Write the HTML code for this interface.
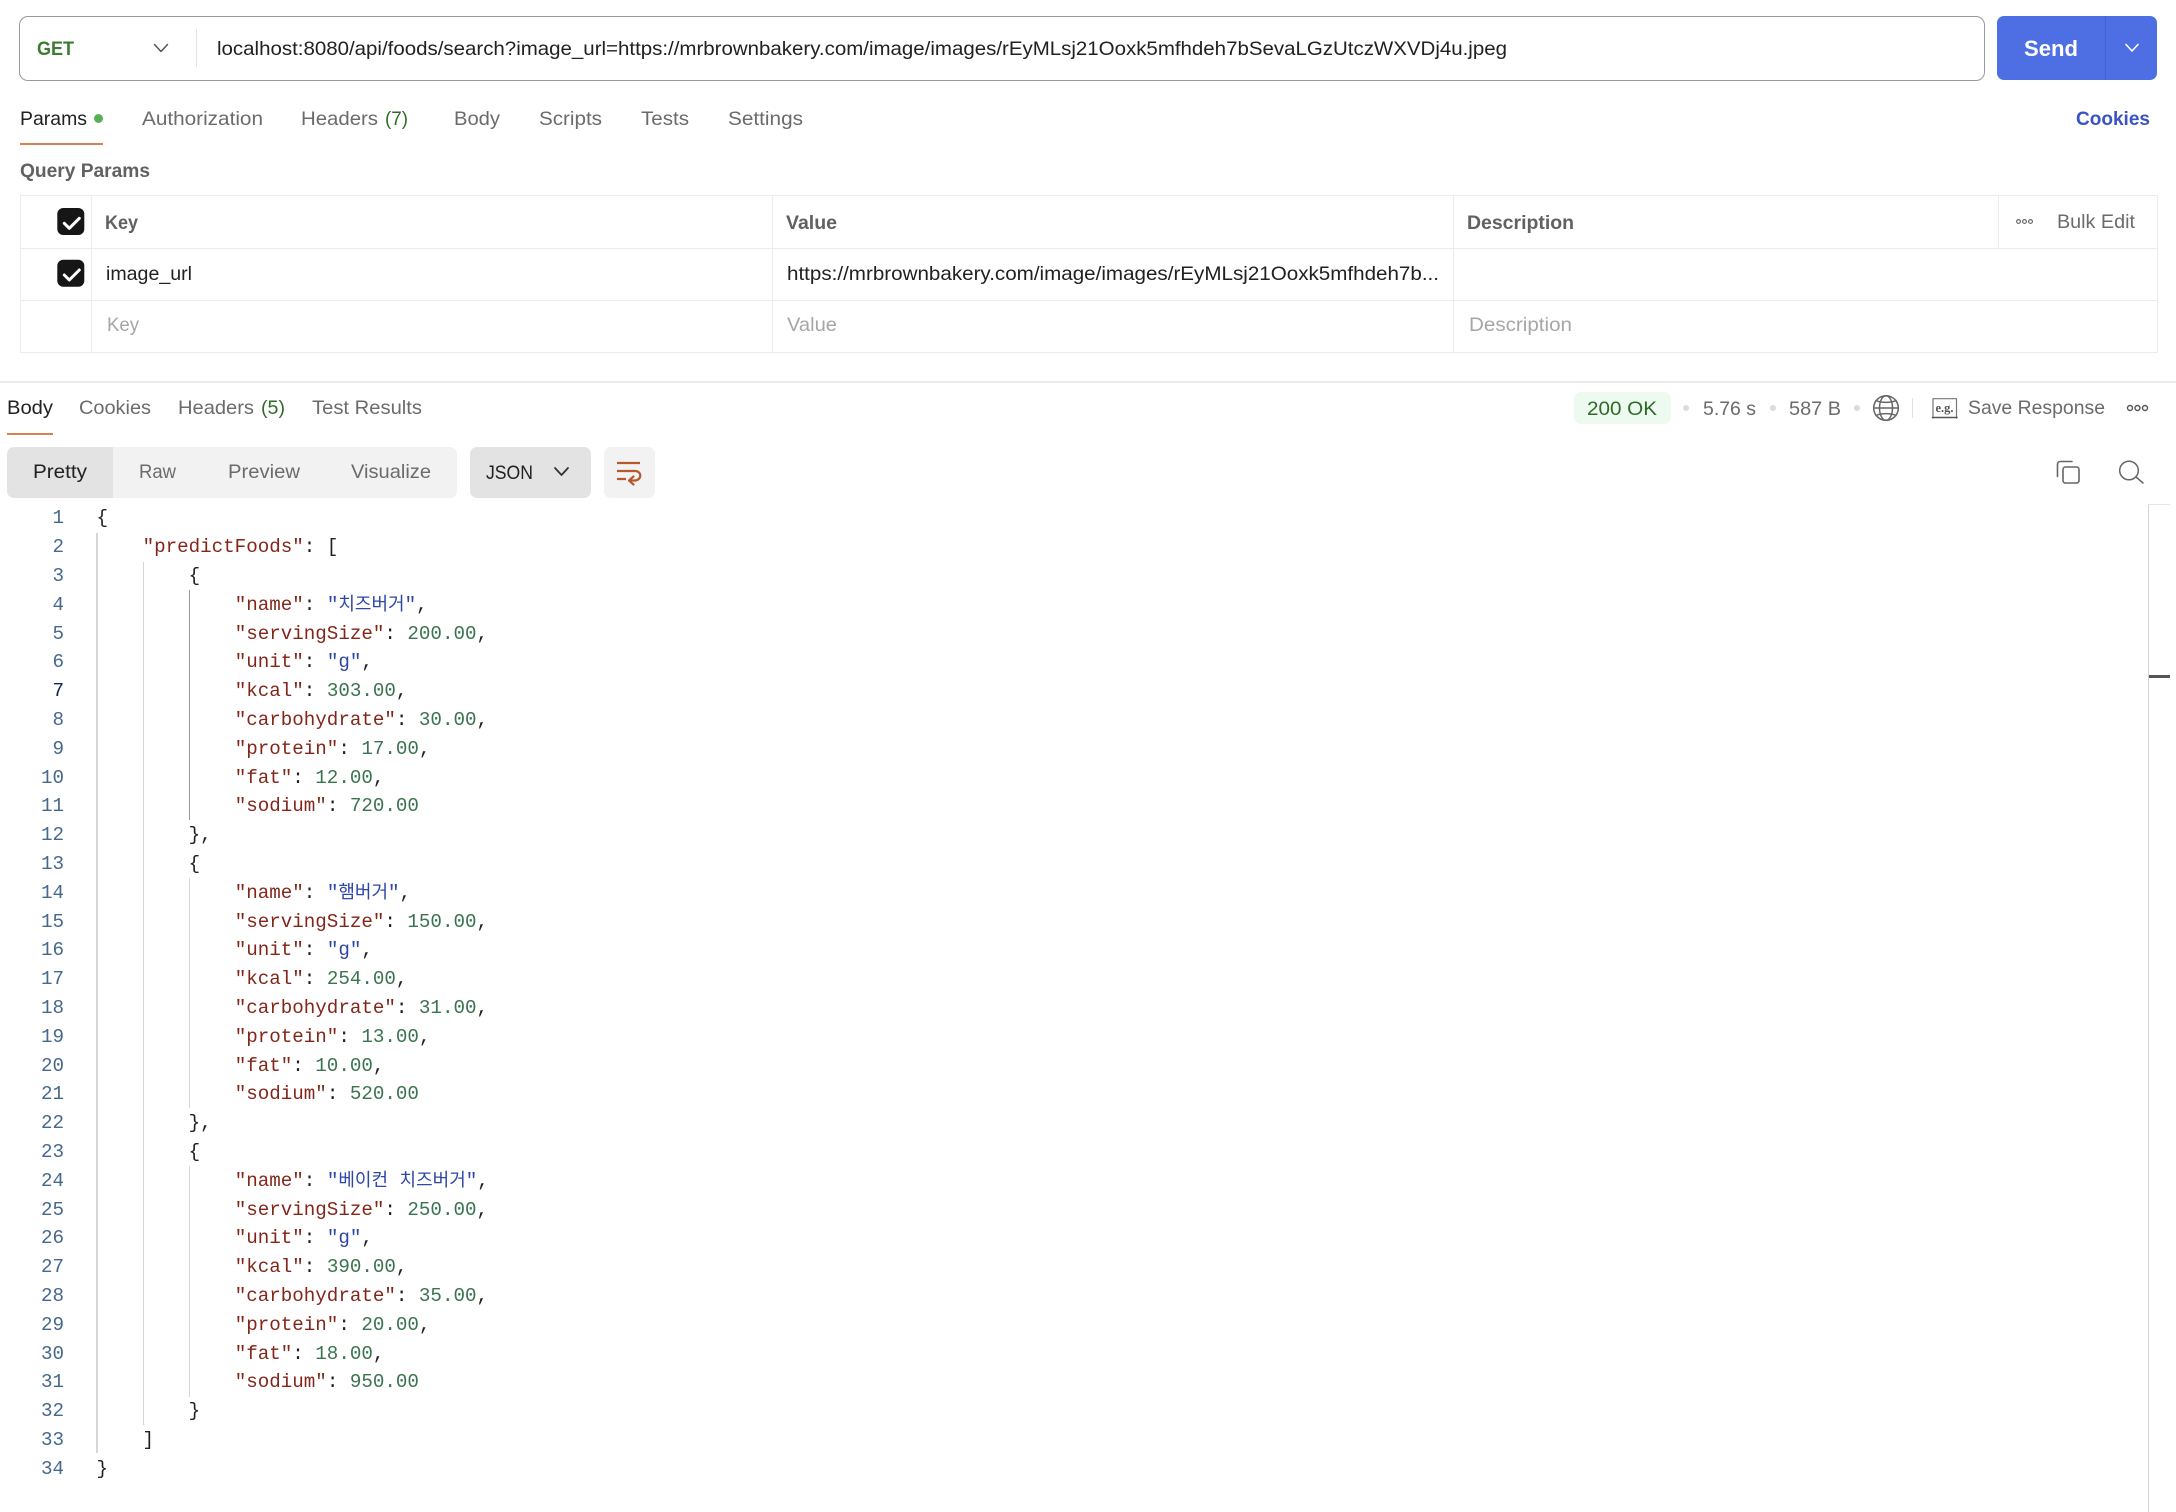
<!DOCTYPE html>
<html lang="en">
<head>
<meta charset="utf-8">
<title>Postman request</title>
<style>
html,body{margin:0;padding:0;background:#fff}
body{width:2176px;height:1512px;position:relative;overflow:hidden;font-family:"Liberation Sans","Noto Sans CJK KR",sans-serif}
.b{position:absolute;box-sizing:border-box}
svg.o{position:absolute;left:0;top:0}
svg text{font-family:"Liberation Sans","Noto Sans CJK KR",sans-serif;font-size:19.8px;fill:#6b6b6b}
svg .d{fill:#212121}
svg .h{font-weight:700;fill:#616161}
svg .ph{fill:#a6a6a6}
svg .g{fill:#2f6b26}
pre{position:absolute;margin:0;font-family:"Liberation Mono","Noto Sans CJK KR",monospace;font-size:19.2px;line-height:28.8px;color:#212121}
pre i{font-style:normal}
.k{color:#83261a}.s{color:#2e46a8}.n{color:#39744f}
.u{font-size:18px;line-height:0;font-family:"Noto Sans CJK KR",sans-serif}
.ln{color:#46688c;text-align:right;width:64px;left:0;top:504.4px}
.ln b{font-weight:400;color:#16264d}
</style>
</head>
<body>
<div class="b" style="left:19px;top:15.500px;width:1966px;height:65.500px;border:1.500px solid #999;border-radius:9px"></div>
<div class="b" style="left:196px;top:29px;width:1.200px;height:38px;background:#e4e4e4"></div>
<div class="b" style="left:1997px;top:16px;width:160px;height:64px;background:#4d6fe3;border-radius:7px"></div>
<div class="b" style="left:2105px;top:16px;width:1px;height:64px;background:#4563cc"></div>
<div class="b" style="left:20px;top:142.500px;width:83px;height:2px;background:#d9804f"></div>
<div class="b" style="left:94px;top:114px;width:9px;height:9px;border-radius:50%;background:#5aaf55"></div>

<div class="b" style="left:20px;top:195px;width:2138px;height:158px;border:1.400px solid #ececec"></div>
<div class="b" style="left:20px;top:248px;width:2138px;height:1.400px;background:#ececec"></div>
<div class="b" style="left:20px;top:300px;width:2138px;height:1.400px;background:#ececec"></div>
<div class="b" style="left:91px;top:195px;width:1.400px;height:158px;background:#ececec"></div>
<div class="b" style="left:772px;top:195px;width:1.400px;height:158px;background:#ececec"></div>
<div class="b" style="left:1453px;top:195px;width:1.400px;height:158px;background:#ececec"></div>
<div class="b" style="left:1998px;top:195px;width:1.400px;height:54px;background:#ececec"></div>

<div class="b" style="left:0;top:381px;width:2176px;height:1.600px;background:#ebebeb"></div>
<div class="b" style="left:7px;top:432.500px;width:46px;height:2px;background:#d9804f"></div>

<div class="b" style="left:1574px;top:392px;width:97px;height:32px;background:#ecfaef;border-radius:7px"></div>
<div class="b" style="left:7px;top:447px;width:450px;height:51px;background:#f2f2f2;border-radius:7px"></div>
<div class="b" style="left:7px;top:447px;width:106px;height:51px;background:#e3e3e3;border-radius:7px 0 0 7px"></div>
<div class="b" style="left:470px;top:447px;width:121px;height:51px;background:#e3e3e3;border-radius:7px"></div>
<div class="b" style="left:604px;top:447px;width:51px;height:51px;background:#f2f2f2;border-radius:7px"></div>

<div class="b" style="left:96px;top:533px;width:1.500px;height:920px;background:#d6d6d6"></div>
<div class="b" style="left:142.500px;top:562px;width:1.500px;height:863px;background:#d6d6d6"></div>
<div class="b" style="left:188.500px;top:590px;width:1.500px;height:230px;background:#9a9a9a"></div>
<div class="b" style="left:188.500px;top:878px;width:1.500px;height:230px;background:#d6d6d6"></div>
<div class="b" style="left:188.500px;top:1166px;width:1.500px;height:231px;background:#d6d6d6"></div>

<div class="b" style="left:2148px;top:504px;width:1px;height:1008px;background:#d4d4d4"></div>
<div class="b" style="left:2148px;top:504px;width:22px;height:1px;background:#e6e6e6"></div>
<div class="b" style="left:2149px;top:675px;width:21px;height:3px;background:#555"></div>

<svg class="o" width="2176" height="1512" viewBox="0 0 2176 1512" xmlns="http://www.w3.org/2000/svg">
<text x="37" y="55" textLength="37" lengthAdjust="spacingAndGlyphs" style="font-weight:700;fill:#3d7a32">GET</text>
<text class="d" x="217" y="55" textLength="1290" lengthAdjust="spacingAndGlyphs">localhost:8080/api/foods/search?image_url=https://mrbrownbakery.com/image/images/rEyMLsj21Ooxk5mfhdeh7bSevaLGzUtczWXVDj4u.jpeg</text>
<text x="2024" y="56" textLength="54" lengthAdjust="spacingAndGlyphs" style="font-weight:700;font-size:22px;fill:#fff">Send</text>

<text class="d" x="20" y="125" textLength="67" lengthAdjust="spacingAndGlyphs">Params</text>
<text x="142" y="125" textLength="121" lengthAdjust="spacingAndGlyphs">Authorization</text>
<text x="301" y="125" textLength="77" lengthAdjust="spacingAndGlyphs">Headers</text>
<text class="g" x="385" y="125" textLength="23" lengthAdjust="spacingAndGlyphs">(7)</text>
<text x="454" y="125" textLength="46" lengthAdjust="spacingAndGlyphs">Body</text>
<text x="539" y="125" textLength="63" lengthAdjust="spacingAndGlyphs">Scripts</text>
<text x="641" y="125" textLength="48" lengthAdjust="spacingAndGlyphs">Tests</text>
<text x="728" y="125" textLength="75" lengthAdjust="spacingAndGlyphs">Settings</text>
<text x="2076" y="125" textLength="74" lengthAdjust="spacingAndGlyphs" style="font-weight:700;fill:#3a53c5">Cookies</text>

<text class="h" x="20" y="177" textLength="130" lengthAdjust="spacingAndGlyphs">Query Params</text>
<text class="h" x="105" y="229" textLength="33" lengthAdjust="spacingAndGlyphs">Key</text>
<text class="h" x="786" y="229" textLength="51" lengthAdjust="spacingAndGlyphs">Value</text>
<text class="h" x="1467" y="229" textLength="107" lengthAdjust="spacingAndGlyphs">Description</text>
<text x="2057" y="228" textLength="78" lengthAdjust="spacingAndGlyphs">Bulk Edit</text>

<text class="d" x="106" y="280" textLength="86" lengthAdjust="spacingAndGlyphs">image_url</text>
<text class="d" x="787" y="280" textLength="652" lengthAdjust="spacingAndGlyphs">https://mrbrownbakery.com/image/images/rEyMLsj21Ooxk5mfhdeh7b...</text>
<text class="ph" x="107" y="331" textLength="32" lengthAdjust="spacingAndGlyphs">Key</text>
<text class="ph" x="787" y="331" textLength="50" lengthAdjust="spacingAndGlyphs">Value</text>
<text class="ph" x="1469" y="331" textLength="103" lengthAdjust="spacingAndGlyphs">Description</text>

<text class="d" x="7" y="414" textLength="46" lengthAdjust="spacingAndGlyphs">Body</text>
<text x="79" y="414" textLength="72" lengthAdjust="spacingAndGlyphs">Cookies</text>
<text x="178" y="414" textLength="76" lengthAdjust="spacingAndGlyphs">Headers</text>
<text class="g" x="261" y="414" textLength="24" lengthAdjust="spacingAndGlyphs">(5)</text>
<text x="312" y="414" textLength="110" lengthAdjust="spacingAndGlyphs">Test Results</text>

<text class="g" x="1587" y="415" textLength="70" lengthAdjust="spacingAndGlyphs">200 OK</text>
<text x="1703" y="415" textLength="53" lengthAdjust="spacingAndGlyphs">5.76 s</text>
<text x="1789" y="415" textLength="52" lengthAdjust="spacingAndGlyphs">587 B</text>
<text x="1968" y="414" textLength="137" lengthAdjust="spacingAndGlyphs">Save Response</text>

<text class="d" x="33" y="478" textLength="54" lengthAdjust="spacingAndGlyphs">Pretty</text>
<text x="139" y="478" textLength="37" lengthAdjust="spacingAndGlyphs">Raw</text>
<text x="228" y="478" textLength="72" lengthAdjust="spacingAndGlyphs">Preview</text>
<text x="351" y="478" textLength="80" lengthAdjust="spacingAndGlyphs">Visualize</text>
<text class="d" x="486" y="479" textLength="47" lengthAdjust="spacingAndGlyphs">JSON</text>

<g fill="none" stroke-linecap="round" stroke-linejoin="round">
<path d="M154.500 44.500L161 51.500L167.500 44.500" stroke="#555" stroke-width="1.500"/>
<path d="M2126 44.500L2132 51L2138 44.500" stroke="#fff" stroke-width="1.600"/>
<path d="M555 468L561.500 475L568 468" stroke="#333" stroke-width="1.800"/>
<g stroke="#6b6b6b" stroke-width="1.200">
<circle cx="2018.500" cy="221.500" r="1.900"/><circle cx="2024.500" cy="221.500" r="1.900"/><circle cx="2030.500" cy="221.500" r="1.900"/>
</g>
<g stroke="#555" stroke-width="1.400">
<circle cx="2130" cy="408" r="2.500"/><circle cx="2137.500" cy="408" r="2.500"/><circle cx="2145" cy="408" r="2.500"/>
</g>
<g stroke="#666" stroke-width="1.500">
<circle cx="1886" cy="408" r="12.300"/>
<ellipse cx="1886" cy="408" rx="6.500" ry="12.300"/>
<path d="M1876 400.500C1881 403 1891 403 1896 400.500M1876 415.500C1881 413 1891 413 1896 415.500M1874 408H1898"/>
</g>
<path d="M1933 418V398.700H1956.500V418" stroke="#777" stroke-width="1.200"/>
<path d="M1932.500 417.500H1957" stroke="#555" stroke-width="1.600"/>
<rect x="2063" y="467" width="16" height="16" rx="2.500" stroke="#666" stroke-width="1.600"/>
<path d="M2072 461.500H2060.500Q2057.500 461.500 2057.500 464.500V476.500" stroke="#666" stroke-width="1.600"/>
<circle cx="2129" cy="470.500" r="9.300" stroke="#666" stroke-width="1.500"/>
<path d="M2136 477L2143 483" stroke="#666" stroke-width="1.500"/>
<g stroke="#b9582e" stroke-width="2.200" stroke-linecap="butt">
<path d="M617 463H640M617 471H635C642 471 642 480 635 480.500H630M617 479H626"/>
<path d="M633.500 476.500L629 480.500L633.500 484.500" stroke-linecap="round"/>
</g>
</g>
<text x="1935.500" y="412" textLength="18" lengthAdjust="spacingAndGlyphs" style="font-family:'Liberation Serif',serif;font-size:13px;font-weight:700;fill:#555">e.g.</text>

<g>
<rect x="57.300" y="208" width="27" height="27" rx="6" fill="#161616"/>
<path d="M64.300 223.300L69.300 228.300L79.300 218.300" fill="none" stroke="#fff" stroke-width="3" stroke-linecap="round" stroke-linejoin="round"/>
<rect x="57.300" y="259.700" width="27" height="27" rx="6" fill="#161616"/>
<path d="M64.300 275L69.300 280L79.300 270" fill="none" stroke="#fff" stroke-width="3" stroke-linecap="round" stroke-linejoin="round"/>
</g>
<circle cx="1686" cy="408" r="3" fill="#dcdcdc"/>
<circle cx="1773" cy="408" r="3" fill="#dcdcdc"/>
<circle cx="1857" cy="408" r="3" fill="#dcdcdc"/>
<rect x="1912" y="398" width="1" height="20" fill="#e0e0e0"/>
</svg>

<pre class="ln">1
2
3
4
5
6
<b>7</b>
8
9
10
11
12
13
14
15
16
17
18
19
20
21
22
23
24
25
26
27
28
29
30
31
32
33
34</pre>
<pre style="left:96.500px;top:504.400px">{
    <i class="k">"predictFoods"</i>: [
        {
            <i class="k">"name"</i>: <i class="s">"<span class="u">치즈버거</span>"</i>,
            <i class="k">"servingSize"</i>: <i class="n">200.00</i>,
            <i class="k">"unit"</i>: <i class="s">"g"</i>,
            <i class="k">"kcal"</i>: <i class="n">303.00</i>,
            <i class="k">"carbohydrate"</i>: <i class="n">30.00</i>,
            <i class="k">"protein"</i>: <i class="n">17.00</i>,
            <i class="k">"fat"</i>: <i class="n">12.00</i>,
            <i class="k">"sodium"</i>: <i class="n">720.00</i>
        },
        {
            <i class="k">"name"</i>: <i class="s">"<span class="u">햄버거</span>"</i>,
            <i class="k">"servingSize"</i>: <i class="n">150.00</i>,
            <i class="k">"unit"</i>: <i class="s">"g"</i>,
            <i class="k">"kcal"</i>: <i class="n">254.00</i>,
            <i class="k">"carbohydrate"</i>: <i class="n">31.00</i>,
            <i class="k">"protein"</i>: <i class="n">13.00</i>,
            <i class="k">"fat"</i>: <i class="n">10.00</i>,
            <i class="k">"sodium"</i>: <i class="n">520.00</i>
        },
        {
            <i class="k">"name"</i>: <i class="s">"<span class="u">베이컨</span> <span class="u">치즈버거</span>"</i>,
            <i class="k">"servingSize"</i>: <i class="n">250.00</i>,
            <i class="k">"unit"</i>: <i class="s">"g"</i>,
            <i class="k">"kcal"</i>: <i class="n">390.00</i>,
            <i class="k">"carbohydrate"</i>: <i class="n">35.00</i>,
            <i class="k">"protein"</i>: <i class="n">20.00</i>,
            <i class="k">"fat"</i>: <i class="n">18.00</i>,
            <i class="k">"sodium"</i>: <i class="n">950.00</i>
        }
    ]
}</pre>
</body>
</html>
